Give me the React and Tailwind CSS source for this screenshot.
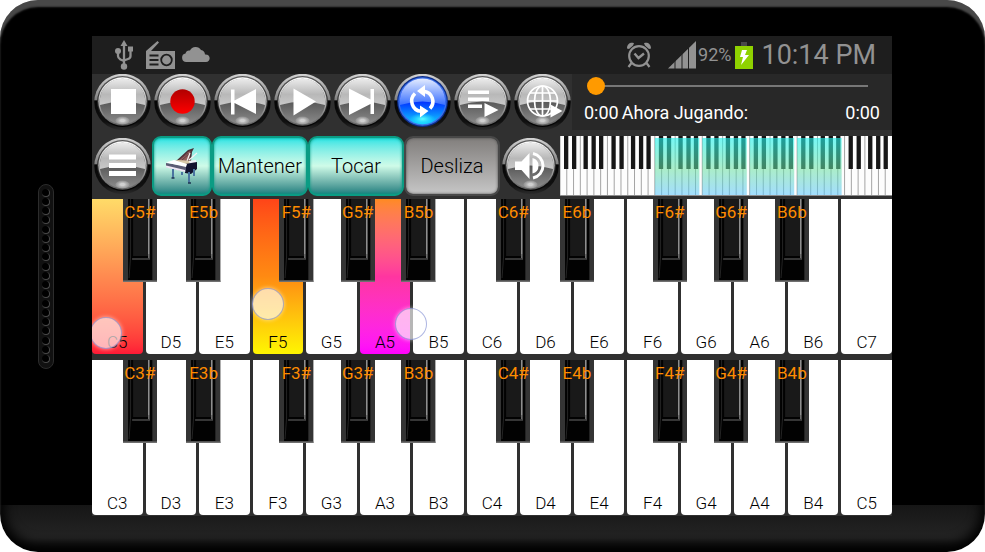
import { useState } from "react";

const NATURALS = ["C", "D", "E", "F", "G", "A", "B"];

// left edge of each black key, in white key widths from the start of the octave
const BLACK_KEYS = [
  { note: "C", mark: "#", at: 0.575 },
  { note: "E", mark: "b", at: 1.77 },
  { note: "F", mark: "#", at: 3.51 },
  { note: "G", mark: "#", at: 4.66 },
  { note: "B", mark: "b", at: 5.8 },
];

const WHITE_COUNT = 15;

const PRESSED = {
  C5: "bg-linear-to-b from-[#ffdb68] via-[#ff8a50] to-[#ff1836]",
  F5: "bg-linear-to-b from-[#ff4418] via-[#ff8a12] to-[#fff600]",
  A5: "bg-linear-to-b from-[#ff8a20] via-[#ff35a0] to-[#ff00ff]",
};

const TOUCHES = [
  { x: 14, y: 134 },
  { x: 175.5, y: 105 },
  { x: 318.5, y: 125 },
];

function UsbIcon() {
  return (
    <svg viewBox="0 0 20 30" className="w-5 h-[30px]" fill="#929292" stroke="#929292">
      <path d="M10 0l3.500 6h-7z" stroke="none" />
      <path d="M10 4v22M4 12v4c0 2 1 2.500 2.500 3.500L10 21M16.500 9v7c0 1.500-1 2.500-2.500 3L10 20.500" fill="none" strokeWidth="2.300" />
      <circle cx="4" cy="11" r="3" stroke="none" />
      <rect x="14" y="6.500" width="5" height="5" stroke="none" />
      <circle cx="10" cy="26.500" r="3.200" stroke="none" />
    </svg>
  );
}

function RadioIcon() {
  return (
    <svg viewBox="0 0 30 29" className="w-[30px] h-[29px]">
      <path d="M1 12V10L12.500 0l1.500 1.500L6 10h24v18H1z" fill="#929292" />
      <path d="M4.500 14.500h9M4.500 19h9M4.500 23.500h9" stroke="#1e1e1e" strokeWidth="1.800" />
      <circle cx="21.500" cy="19" r="5.300" fill="none" stroke="#1e1e1e" strokeWidth="1.800" />
    </svg>
  );
}

function CloudIcon() {
  return (
    <svg viewBox="0 0 28 16" className="w-7 h-4" fill="#929292">
      <path d="M4.500 16a4.300 4.300 0 0 1-1-8.500 4 4 0 0 1 4.500-3A6.200 6.200 0 0 1 19 4a5 5 0 0 1 4 4.500A3.800 3.800 0 1 1 24 16z" />
    </svg>
  );
}

function AlarmIcon() {
  return (
    <svg viewBox="0 0 26 26" className="w-[26px] h-[26px]" fill="none" stroke="#929292">
      <circle cx="13" cy="14" r="9.800" strokeWidth="2.200" />
      <path d="M8.500 11.500l4 4.500 5.500-4.500" strokeWidth="2.400" />
      <path d="M5.500 21L2.500 25M20.500 21l3 4" strokeWidth="2.200" />
      <path d="M1 6.500C1 2 4.500 0 8 1.200L7 3.500 3 7zM25 6.500C25 2 21.500 0 18 1.200l1 2.300 4 3.500z" fill="#929292" stroke="none" />
    </svg>
  );
}

function SignalIcon() {
  return (
    <svg viewBox="0 0 28 28" className="w-7 h-7">
      <path d="M0 27.500L28 0v27.500z" fill="#929292" />
      <path d="M7 0v28M14 0v28M20.500 0v28" stroke="#1e1e1e" strokeWidth="1" />
    </svg>
  );
}

function BatteryIcon() {
  return (
    <svg viewBox="0 0 18 28" className="w-[18px] h-7">
      <rect x="6" y="1" width="6" height="4" fill="#484848" />
      <rect y="5" width="18" height="23" fill="#8fd200" />
      <path d="M7 9h5l-2 5h4l-8 10 2-8H5z" fill="#fff" />
    </svg>
  );
}

function StatusBar() {
  return (
    <header className="flex h-[38px] items-center justify-between bg-[#1e1e1e] pl-[22px] pr-4 text-[#929292]">
      <div className="flex items-center">
        <UsbIcon />
        <span className="ml-[11px]">
          <RadioIcon />
        </span>
        <span className="ml-[7px] pb-0.5">
          <CloudIcon />
        </span>
      </div>
      <div className="flex items-center">
        <AlarmIcon />
        <span className="ml-4">
          <SignalIcon />
        </span>
        <span className="ml-0.5 text-lg">92%</span>
        <span className="ml-1">
          <BatteryIcon />
        </span>
        <span className="ml-2 text-[27px]">10:14 PM</span>
      </div>
    </header>
  );
}

function Gradients() {
  return (
    <svg className="absolute h-0 w-0" aria-hidden="true">
      <defs>
        <linearGradient id="rim" x1="0" y1="0" x2="0" y2="1">
          <stop offset="0" stopColor="#d4d4d4" />
          <stop offset="0.200" stopColor="#b0b0b0" />
          <stop offset="0.460" stopColor="#808080" />
          <stop offset="0.480" stopColor="#050505" />
          <stop offset="0.850" stopColor="#101010" />
          <stop offset="1" stopColor="#2c2c2c" />
        </linearGradient>
        <linearGradient id="groove" x1="0" y1="0" x2="0" y2="1">
          <stop offset="0" stopColor="#5a5a5a" />
          <stop offset="0.500" stopColor="#303030" />
          <stop offset="1" stopColor="#000000" />
        </linearGradient>
        <linearGradient id="ring" x1="0" y1="0" x2="0" y2="1">
          <stop offset="0" stopColor="#ffffff" />
          <stop offset="0.500" stopColor="#b4b4b4" />
          <stop offset="1" stopColor="#5c5c5c" />
        </linearGradient>
        <linearGradient id="gloss" x1="0" y1="0" x2="0" y2="1">
          <stop offset="0" stopColor="#ececec" />
          <stop offset="0.600" stopColor="#b8b8b8" />
          <stop offset="1" stopColor="#c8c8c8" />
        </linearGradient>
        <linearGradient id="shade" x1="0" y1="0" x2="0" y2="1">
          <stop offset="0.450" stopColor="#525252" />
          <stop offset="1" stopColor="#8c8c8c" />
        </linearGradient>
        <linearGradient id="glossBlue" x1="0" y1="0" x2="0" y2="1">
          <stop offset="0" stopColor="#e4ecff" />
          <stop offset="1" stopColor="#3a70ff" />
        </linearGradient>
        <linearGradient id="shadeBlue" x1="0" y1="0" x2="0" y2="1">
          <stop offset="0.450" stopColor="#0020ff" />
          <stop offset="1" stopColor="#10d0ff" />
        </linearGradient>
        <radialGradient id="glint">
          <stop offset="0.300" stopColor="#d8d8d8" stopOpacity="0.900" />
          <stop offset="1" stopColor="#b0b0b0" stopOpacity="0.350" />
        </radialGradient>
        <radialGradient id="glintBlue">
          <stop offset="0" stopColor="#60ffff" />
          <stop offset="1" stopColor="#20e8ff" stopOpacity="0" />
        </radialGradient>
        <linearGradient id="red" x1="0" y1="0" x2="0" y2="1">
          <stop offset="0" stopColor="#b00000" />
          <stop offset="1" stopColor="#ff0000" />
        </linearGradient>
        <linearGradient id="range" x1="0" y1="0" x2="0" y2="1">
          <stop offset="0" stopColor="#20f4f0" stopOpacity="0.620" />
          <stop offset="0.550" stopColor="#68e0a0" stopOpacity="0.550" />
          <stop offset="1" stopColor="#58c4ff" stopOpacity="0.550" />
        </linearGradient>
      </defs>
    </svg>
  );
}

function RoundButton({ label, active, children }) {
  return (
    <button type="button" aria-label={label} className="h-14 w-[60px] shrink-0">
      <svg viewBox="0 0 60 56" className="h-14 w-[60px]">
        <circle cx="30.500" cy="28" r="28.200" fill="url(#rim)" />
        <circle cx="30.500" cy="27.500" r="25.400" fill={active ? "#0c2c88" : "url(#groove)"} />
        <circle cx="30.500" cy="27.500" r="24.200" fill={active ? "#3a70e8" : "url(#ring)"} />
        <circle cx="30.500" cy="27.500" r="22.800" fill={active ? "url(#shadeBlue)" : "url(#shade)"} />
        <path
          d="M8 31A22.800 22.800 0 1 1 53 31Q30.500 24 8 31z"
          fill={active ? "url(#glossBlue)" : "url(#gloss)"}
        />
        <ellipse
          cx="30.500"
          cy={active ? 45 : 46.500}
          rx={active ? 13 : 7}
          ry={active ? 6 : 4}
          fill={active ? "url(#glintBlue)" : "url(#glint)"}
        />
        {children}
      </svg>
    </button>
  );
}

function Transport() {
  return (
    <div className="flex shrink-0">
      <RoundButton label="Detener">
        <path d="M19 15h25v25H19z" fill="#fff" />
      </RoundButton>
      <RoundButton label="Grabar">
        <circle cx="30.500" cy="27.500" r="12.200" fill="url(#red)" />
      </RoundButton>
      <RoundButton label="Anterior">
        <path d="M19 15.500h3.500v11L44 15v25L22.500 29v11.500H19z" fill="#fff" />
      </RoundButton>
      <RoundButton label="Reproducir">
        <path d="M21.500 14.500L44 27.500l-22.500 14z" fill="#fff" />
      </RoundButton>
      <RoundButton label="Siguiente">
        <path d="M17 14.500l21.500 11V15H42v25h-3.500V30L17 41z" fill="#fff" />
      </RoundButton>
      <RoundButton label="Repetir" active>
        <path
          d="M23 19.500a10.300 10.300 0 0 0 6 17.800M32 17.200a10.300 10.300 0 0 1 6 17.300"
          fill="none"
          stroke="#fff"
          strokeWidth="3.600"
        />
        <path d="M33 11v12l-8-6zM28 31.500v12l8.500-6.500z" fill="#fff" />
      </RoundButton>
      <RoundButton label="Lista">
        <path d="M16 16.500h21v3.500H16zM16 23.500h21V27H16zM16 30.500h14V34H16zM32.500 29l14 7-14 7z" fill="#fff" />
      </RoundButton>
      <RoundButton label="En línea">
        <g fill="none" stroke="#fff" strokeWidth="1.700">
          <circle cx="30.500" cy="27" r="15" />
          <ellipse cx="30.500" cy="27" rx="8" ry="15" />
          <path d="M30.500 12v30M15.500 27h30M18 19h25M18 35h25" />
        </g>
        <path d="M38.500 30.500l12 6.500-12 6.500z" fill="#fff" />
      </RoundButton>
    </div>
  );
}

function Player() {
  const [position, setPosition] = useState(0);

  return (
    <div className="flex h-14 flex-1 flex-col justify-between bg-[#282828] pt-[3px] pb-1 text-lg text-white">
      <input
        type="range"
        min="0"
        max="100"
        value={position}
        onChange={(e) => setPosition(Number(e.target.value))}
        aria-label="Posición"
        className="mx-[15px] h-[18px] appearance-none bg-[linear-gradient(#777,#777)] bg-[length:calc(100%-18px)_2px] bg-center bg-no-repeat [&::-webkit-slider-thumb]:size-[18px] [&::-webkit-slider-thumb]:appearance-none [&::-webkit-slider-thumb]:rounded-full [&::-webkit-slider-thumb]:bg-[#ff9a00]"
      />
      <div className="flex gap-[3px] px-3 leading-[26px]">
        <span>0:00</span>
        <span>Ahora Jugando:</span>
        <span className="ml-auto">0:00</span>
      </div>
    </div>
  );
}

function ModeButton({ on, className, children }) {
  return (
    <button
      type="button"
      className={`flex h-[60px] items-center justify-center rounded-[9px] text-[20px] font-light text-black ${
        on
          ? "border-2 border-[#0b9c84] bg-linear-to-b from-[#18e4e4] via-[#cffbe8] to-[#1a8080] shadow-[inset_0_0_3px_#0b9c84]"
          : "border-2 border-[#484848] bg-linear-to-b from-[#827f7d] to-[#c6c6c6] bg-clip-padding shadow-[inset_0_0_3px_#484848]"
      } ${className}`}
    >
      {children}
    </button>
  );
}

function GrandPiano() {
  return (
    <svg viewBox="0 0 34 38" className="h-[38px] w-[34px]">
      <path d="M11 14L23 3l6-2-2 4-1 9-8 2z" fill="#4a3038" />
      <path d="M14 13L23 5l2.500-1-1 9-6 1z" fill="#94605c" />
      <path d="M15 12l8-6M17 13l7-6" stroke="#5a3840" strokeWidth="0.800" />
      <path d="M24 13l8-7M22 14l3-8" stroke="#f4f4f4" strokeWidth="1.200" />
      <path d="M5 15l8-2 17 1-9 4z" fill="#d9c9a8" />
      <path d="M24 14l7-1v3l-6 1z" fill="#f0f0f8" />
      <path d="M20 17l12-2v7l-6 5-6-1z" fill="#12122e" />
      <path d="M1 16l20 3v6L1 20z" fill="#5c5c74" />
      <path d="M1 15.500L9 13l13 4-1 3z" fill="#fff" />
      <path d="M1 18.500l19 4.500v2L1 20.500z" fill="#efe8f4" />
      <path d="M8 22v9M17 25v3M24 25v11M29 22v7" stroke="#4a74a0" strokeWidth="2" />
      <path d="M6.500 31h3M23 36h3" stroke="#1c3450" strokeWidth="1.500" />
    </svg>
  );
}

function RangeMap() {
  const octaves = [0, 1, 2, 3, 4, 5, 6];
  const octave = 332 / 7;

  return (
    <svg viewBox="0 0 332 60" preserveAspectRatio="none" className="h-[60px] min-w-0 flex-1">
      <rect width="332" height="60" fill="#fdfdfd" />
      {octaves.map((o) => (
        <g key={o} transform={`translate(${o * octave} 0)`}>
          {NATURALS.map((n, i) => (
            <path key={n} d={`M${((i * octave) / 7).toFixed(2)} 0v60`} stroke="#a4a4a4" strokeWidth="1" />
          ))}
          {[4, 12, 23.5, 31.5, 39].map((x) => (
            <rect key={x} x={x} y="0" width="4.300" height="33" fill="#161616" />
          ))}
        </g>
      ))}
      {octaves.slice(2, 6).map((o) => (
        <rect key={o} x={o * octave} y="2" width="44.500" height="57" fill="url(#range)" />
      ))}
      <path d="M0 59.500h332" stroke="#8c8c8c" />
    </svg>
  );
}

function BlackKey({ name, left }) {
  return (
    <button
      type="button"
      className="absolute top-0 h-[83px] w-[4.3%] text-[17px] text-[#ff8c00]"
      style={{ left: `${left}%` }}
    >
      <svg viewBox="0 0 34 83" preserveAspectRatio="none" className="absolute inset-0 h-full w-full">
        <rect width="34" height="83" fill="#343434" />
        <rect y="81.500" width="34" height="1.500" fill="#707070" />
        <rect x="5" width="24" height="81" fill="#020202" />
        <rect x="10" width="15" height="57" fill="#191919" />
        <path d="M7.500 0v57L6 79" stroke="#242424" fill="none" />
        <path d="M25.500 0v59" stroke="#8e8e8e" strokeWidth="1.600" />
        <path d="M9 60h17v-5" stroke="#484848" strokeWidth="1.500" fill="none" />
      </svg>
      <span className="absolute inset-x-0 top-[3px] flex justify-center leading-5">{name}</span>
    </button>
  );
}

function Keyboard({ octave, pressed = {}, touches = [] }) {
  const whites = Array.from({ length: WHITE_COUNT }, (_, i) => ({
    name: NATURALS[i % 7] + (octave + Math.floor(i / 7)),
  }));
  const blacks = [0, 1].flatMap((o) =>
    BLACK_KEYS.map((k) => ({
      name: k.note + (octave + o) + k.mark,
      left: ((k.at + o * 7) / WHITE_COUNT) * 100,
    }))
  );

  return (
    <section className="relative flex h-[155px] gap-[3px] overflow-hidden">
      {whites.map((key) => (
        <button
          type="button"
          key={key.name}
          className={`flex min-w-0 flex-1 items-end justify-center rounded-b-[4px] text-[17px] leading-6 font-light text-black ${
            pressed[key.name] || "bg-white"
          }`}
        >
          {key.name}
        </button>
      ))}
      {blacks.map((key) => (
        <BlackKey key={key.name} name={key.name} left={key.left} />
      ))}
      {touches.map((t) => (
        <span
          key={t.x}
          className="pointer-events-none absolute size-8 -translate-x-1/2 -translate-y-1/2 rounded-full border border-[#6070c8]/50 bg-white/65 shadow-[0_0_4px_#ffffff90]"
          style={{ left: `${t.x / 8}%`, top: t.y }}
        />
      ))}
    </section>
  );
}

function Speaker() {
  return (
    <div className="flex h-[185px] w-4 flex-col items-center justify-between rounded-full border border-[#2c2c2c] bg-[#111111] py-1">
      {Array.from({ length: 19 }, (_, i) => (
        <span key={i} className="size-2 rounded-full border-r border-b border-[#4a4a4a] bg-black" />
      ))}
    </div>
  );
}

function App() {
  return (
    <div className="bg-white font-[Roboto,sans-serif]">
      <Gradients />
      <div className="flex rounded-[38px] bg-black bg-[linear-gradient(#161616,#242424_70%,#101010)] bg-[length:100%_47px] bg-bottom bg-no-repeat py-9 shadow-[inset_0_7px_2px_#484848,inset_0_-4px_12px_4px_#000]">
        <div className="flex w-[92px] shrink-0 items-center justify-center">
          <Speaker />
        </div>
        <main className="min-w-0 flex-1 bg-[#303030] pb-px">
          <StatusBar />
          <div className="flex">
            <Transport />
            <Player />
          </div>
          <div className="flex items-center pt-1.5 pb-[3px]">
            <RoundButton label="Menú">
              <path d="M17 16.500h27v5H17zM17 25h27v5H17zM17 33h27v5H17z" fill="#fff" />
            </RoundButton>
            <ModeButton on className="w-[60px]">
              <GrandPiano />
            </ModeButton>
            <ModeButton on className="w-24">
              Mantener
            </ModeButton>
            <ModeButton on className="w-24">
              Tocar
            </ModeButton>
            <ModeButton className="w-24">Desliza</ModeButton>
            <RoundButton label="Volumen">
              <path d="M15 23.500h6.500L29.500 15v26l-8-9H15z" fill="#fff" />
              <path d="M32.500 20a8 8 0 0 1 0 15.500z" fill="#fff" />
              <path d="M33 15.500a12.500 12.500 0 0 1 0 24.500" fill="none" stroke="#fff" strokeWidth="3" />
            </RoundButton>
            <RangeMap />
          </div>
          <div className="flex flex-col gap-1.5">
            <Keyboard octave={5} pressed={PRESSED} touches={TOUCHES} />
            <Keyboard octave={3} />
          </div>
        </main>
        <div className="w-[93px] shrink-0" />
      </div>
    </div>
  );
}

export default App;
